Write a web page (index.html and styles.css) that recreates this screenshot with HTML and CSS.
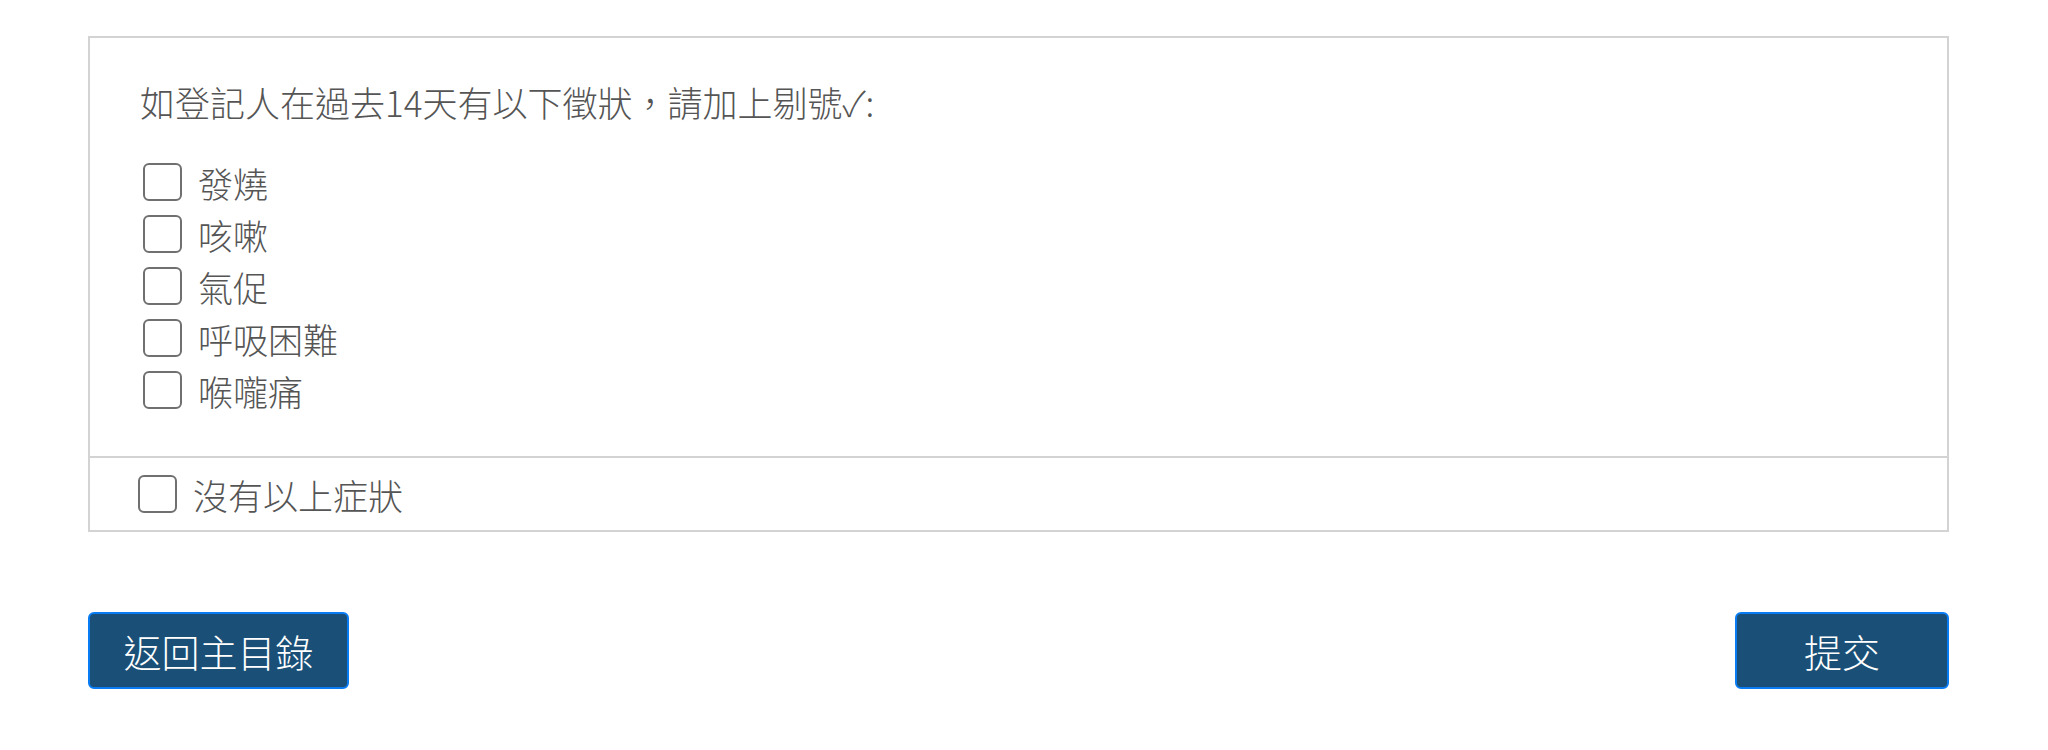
FILE: index.html
```html
<!DOCTYPE html>
<html lang="zh-TW">
<head>
<meta charset="utf-8">
<title>徵狀申報</title>
<link rel="stylesheet" href="styles.css">
</head>
<body>
<main class="page">
  <section class="panel">
    <div class="panel-top">
      <p class="question">如登記人在過去14天有以下徵狀，請加上剔號✓:</p>
      <ul class="options">
        <li class="option"><label><input type="checkbox" class="box"><span>發燒</span></label></li>
        <li class="option"><label><input type="checkbox" class="box"><span>咳嗽</span></label></li>
        <li class="option"><label><input type="checkbox" class="box"><span>氣促</span></label></li>
        <li class="option"><label><input type="checkbox" class="box"><span>呼吸困難</span></label></li>
        <li class="option"><label><input type="checkbox" class="box"><span>喉嚨痛</span></label></li>
      </ul>
    </div>
    <div class="panel-bottom">
      <label class="none-option"><input type="checkbox" class="box"><span>沒有以上症狀</span></label>
    </div>
  </section>
  <div class="actions">
    <button class="btn btn-back" type="button">返回主目錄</button>
    <button class="btn btn-submit" type="button">提交</button>
  </div>
</main>
</body>
</html>
```

FILE: styles.css
```css
* { box-sizing: border-box; }

html, body {
  margin: 0;
  padding: 0;
  background: #ffffff;
}

body {
  font-family: "Noto Sans CJK TC", "Noto Sans", "Liberation Sans", sans-serif;
  font-weight: 300;
  color: #555555;
}

.page {
  padding: 36px 99px 0 88px;
}

.panel {
  border: 2px solid #d3d3d3;
}

.panel-top {
  padding: 39px 0 40px 0;
}

.question {
  margin: 0 0 29px 50px;
  font-size: 35px;
  line-height: 50px;
  color: #555555;
}

.options {
  list-style: none;
  margin: 0;
  padding: 0 0 0 53px;
}

.option label,
.none-option {
  display: flex;
  align-items: center;
  height: 52px;
  font-size: 35px;
  color: #555555;
}

.box {
  appearance: none;
  -webkit-appearance: none;
  margin: 0 16px 0 0;
  width: 39px;
  height: 38px;
  border: 2px solid #707070;
  border-radius: 6px;
  background: #ffffff;
  flex: none;
}

.panel-bottom {
  border-top: 2px solid #d3d3d3;
  height: 74px;
  display: flex;
  align-items: center;
  padding-left: 48px;
}

.none-option {
  height: 72px;
}

.actions {
  display: flex;
  justify-content: space-between;
  margin-top: 80px;
}

.btn {
  display: flex;
  align-items: center;
  justify-content: center;
  height: 77px;
  border: 2px solid #0a7cf3;
  border-radius: 6px;
  background: #1a5077;
  color: #ffffff;
  font-family: "Noto Sans CJK TC", "Noto Sans", sans-serif;
  font-weight: 300;
  font-size: 38px;
  padding: 0;
}

.btn-back { width: 261px; }
.btn-submit { width: 214px; }
```
